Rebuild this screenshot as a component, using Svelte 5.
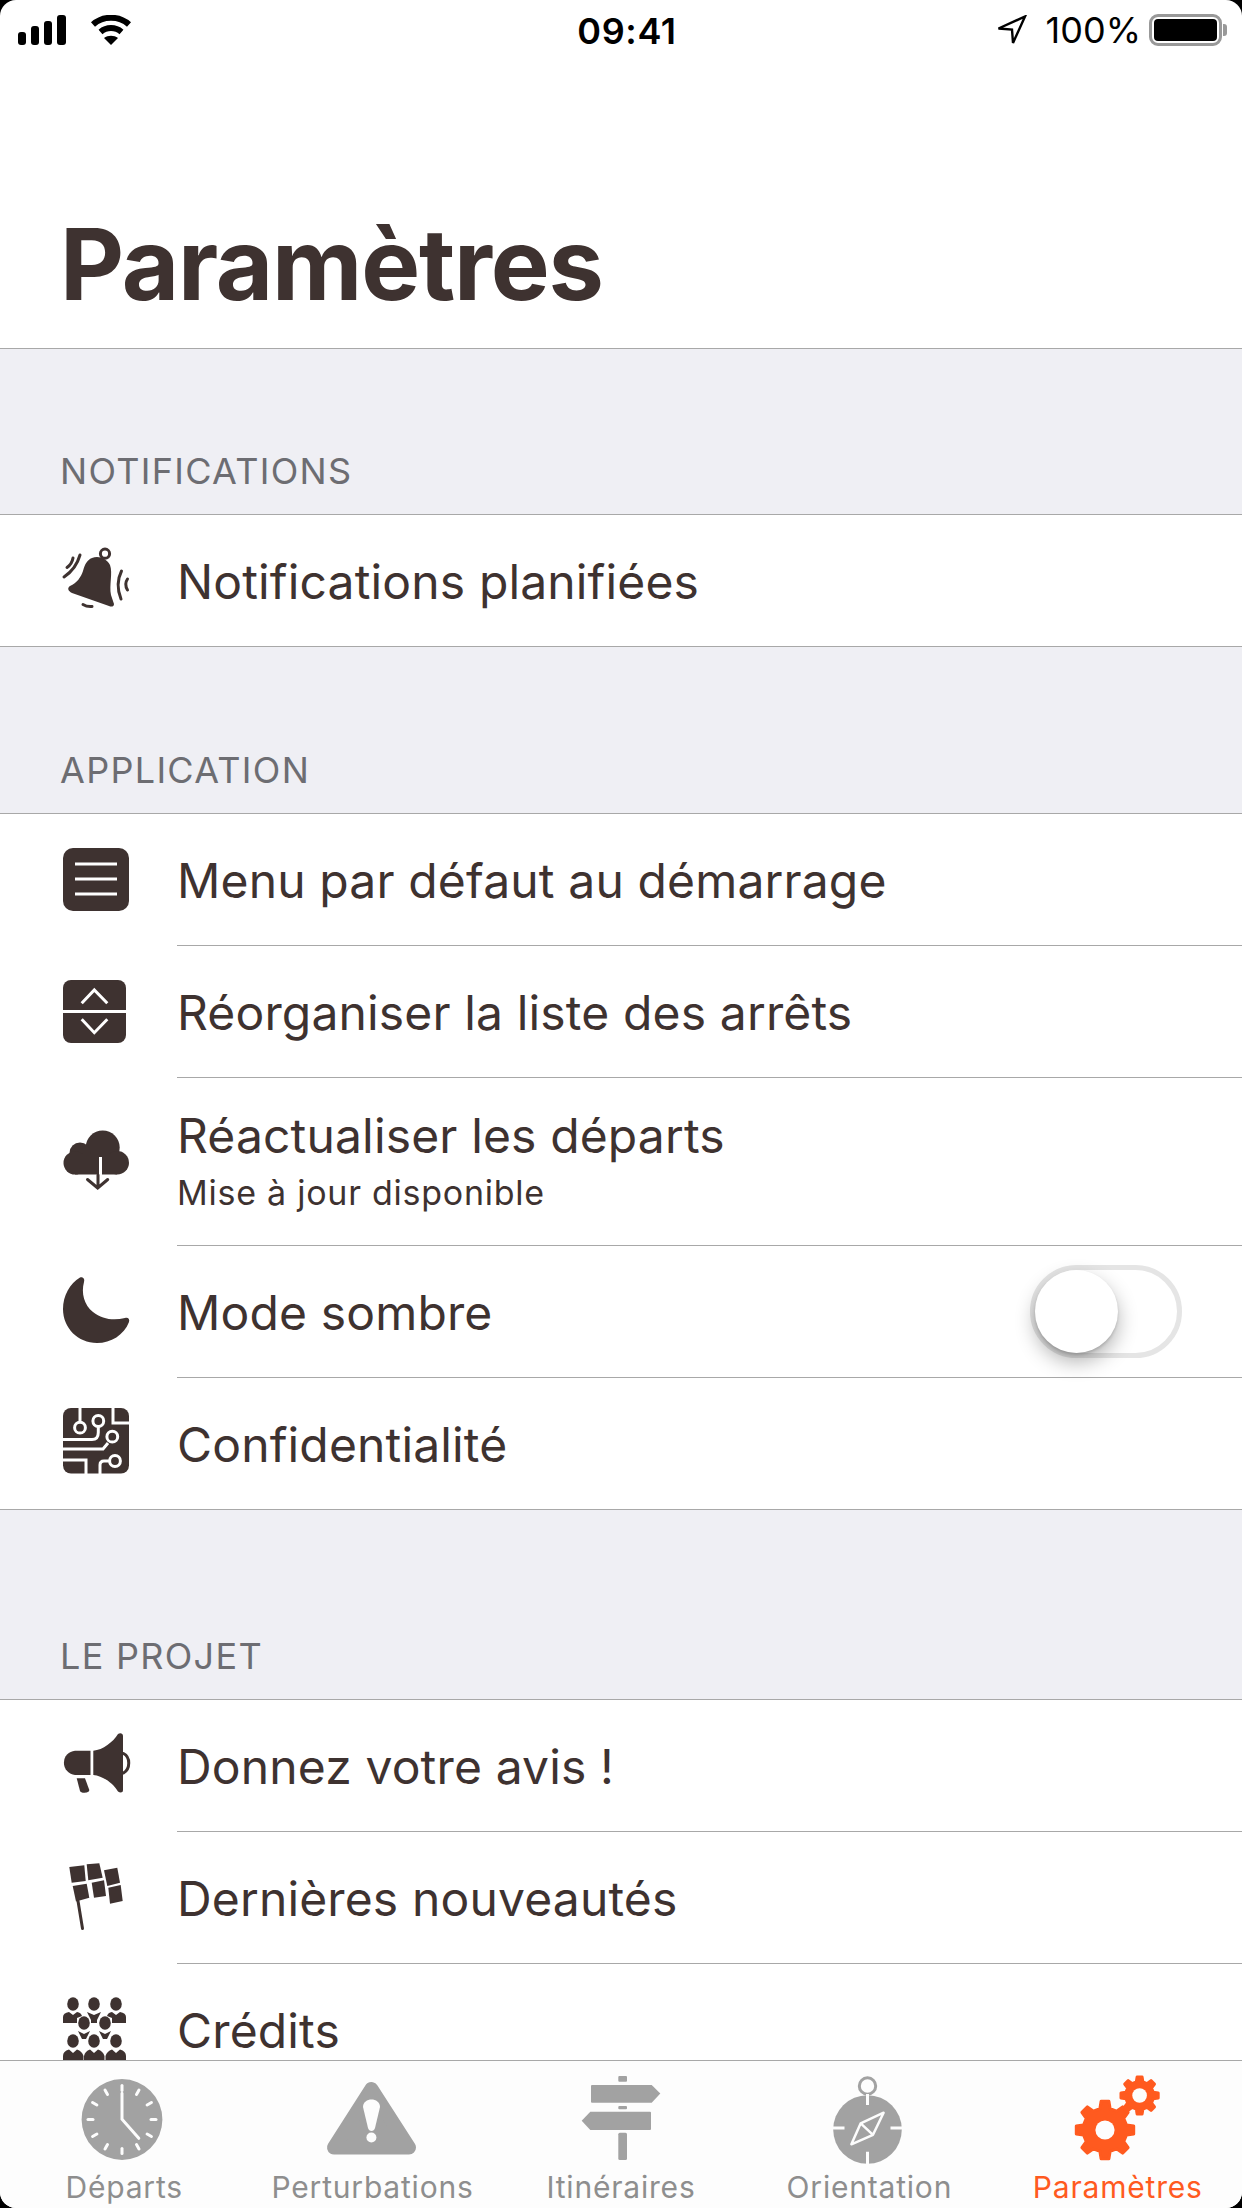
<script>
	const tabs = ['Départs', 'Perturbations', 'Itinéraires', 'Orientation', 'Paramètres'];
	const hours = Array.from({ length: 12 }, (_, i) => i * 30);

	// heads of the credits crowd, bodies are drawn by hand below
	const heads = [
		[10, 8], [31, 8], [53, 8],
		[21, 27], [42, 27],
		[10, 45], [31, 45], [53, 45]
	];

	function gear(cx, cy, outer, inner, teeth) {
		const step = (Math.PI * 2) / teeth;
		let d = '';
		for (let i = 0; i < teeth; i++) {
			const a = i * step;
			const pts = [
				[inner, a - step * 0.3],
				[outer, a - step * 0.17],
				[outer, a + step * 0.17],
				[inner, a + step * 0.3]
			];
			for (const [r, t] of pts) {
				d += (d ? 'L' : 'M') + (cx + r * Math.cos(t)).toFixed(1) + ' ' + (cy + r * Math.sin(t)).toFixed(1);
			}
		}
		return d + 'Z';
	}
</script>

<div class="screen">
	<div class="status">
		<div class="status-left">
			<svg class="signal" viewBox="0 0 48 30" aria-hidden="true">
				<rect x="0" y="17" width="8" height="13" rx="3" />
				<rect x="13" y="11" width="8" height="19" rx="3" />
				<rect x="26" y="6" width="8" height="24" rx="3" />
				<rect x="39" y="0" width="9" height="30" rx="3" />
			</svg>
			<svg class="wifi" viewBox="0 0 42 30" aria-hidden="true">
				<path d="M3 9.5C13 0.5 29 0.5 39 9.5" />
				<path d="M10.5 17C16.5 11.8 25.5 11.8 31.5 17" />
				<path class="wifi-tip" d="M21 30L14 23C18 20 24 20 28 23Z" />
			</svg>
		</div>
		<div class="time">09:41</div>
		<div class="status-right">
			<svg class="arrow" viewBox="0 0 30 30" aria-hidden="true">
				<path d="M1.5 13.5L28 1.5L16 28L15 14.5Z" />
			</svg>
			<span class="pct">100%</span>
			<div class="battery"><div class="battery-fill"></div></div>
			<div class="battery-nub"></div>
		</div>
	</div>

	<header class="head">
		<h1>Paramètres</h1>
	</header>

	<main class="list">
		<div class="label first">NOTIFICATIONS</div>
		<div class="group">
			<div class="row">
				<svg class="ico" viewBox="0 0 66 66" aria-hidden="true">
					<circle class="line" cx="42" cy="6.7" r="4.6" />
					<path d="M29 11C36 8 44 12 47 18C50 26 46 38 48 48L51 57C51 60 48 60 46 59L9 46C5 44 4 41 7 39C14 36 18 30 20 24C22 17 24 13 29 11Z" />
					<path class="line" d="M20 57.5Q24 60 29 59.5" />
					<path class="line" d="M1 30Q13 22 17 8" />
					<path class="line" d="M4 20.5Q9 17 10 11" />
					<path class="line" d="M58.5 24Q52 37 58 52" />
					<path class="line" d="M64.5 32Q61 37 64.5 43" />
				</svg>
				<div class="body"><span class="title">Notifications planifiées</span></div>
			</div>
		</div>

		<div class="label second">APPLICATION</div>
		<div class="group">
			<div class="row">
				<svg class="ico" viewBox="0 0 66 66" aria-hidden="true">
					<rect x="0" y="1" width="66" height="63" rx="10" />
					<path class="cut" d="M12 17H54M12 32H54M12 47H54" />
				</svg>
				<div class="body"><span class="title">Menu par défaut au démarrage</span></div>
			</div>
			<div class="row">
				<svg class="ico" viewBox="0 0 66 66" aria-hidden="true">
					<path d="M8 1H55A8 8 0 0 1 63 9V31H0V9A8 8 0 0 1 8 1Z" />
					<path d="M0 34H63V56A8 8 0 0 1 55 64H8A8 8 0 0 1 0 56Z" />
					<path class="cut" d="M18.7 24.3L31.3 11L44.3 24.3M18.7 40.3L31.3 53.7L44.3 40.3" />
				</svg>
				<div class="body"><span class="title">Réorganiser la liste des arrêts</span></div>
			</div>
			<div class="row tall">
				<svg class="ico" viewBox="0 0 66 66" aria-hidden="true">
					<circle cx="39.7" cy="18.5" r="17" />
					<circle cx="17" cy="24" r="10.5" />
					<circle cx="12" cy="34" r="11.5" />
					<circle cx="54.3" cy="33.7" r="11.7" />
					<rect x="12" y="25" width="42" height="20.5" />
					<path class="cut" d="M37.5 28V46" />
					<path class="line" d="M35 46V58M24.5 50.5L34.7 59L44.7 50.5" />
				</svg>
				<div class="body">
					<div>
						<div class="title">Réactualiser les départs</div>
						<div class="sub">Mise à jour disponible</div>
					</div>
				</div>
			</div>
			<div class="row">
				<svg class="ico" viewBox="0 0 66 66" aria-hidden="true">
					<path d="M17-1.5C20-2.5 22 0 21 3C18 14 21 26 30 33C39 40 50 42 62 39C65 38 67 40 66 43C61 56 48 64 34 64C15 64 0 49 0 30C0 17 7 4 17-1.5Z" />
				</svg>
				<div class="body">
					<span class="title">Mode sombre</span>
					<div class="toggle"><div class="knob"></div></div>
				</div>
			</div>
			<div class="row">
				<svg class="ico" viewBox="0 0 66 66" aria-hidden="true">
					<rect x="0" y="-2" width="66" height="65.5" rx="8" />
					<path class="cut" d="M17-2V12M35.3 17V22.5Q35.3 29.5 29 29.5H0M50-2V13H66M0 39H40L45 33M0 50H23V64M37 64V55Q37 51 41 51H46" />
					<circle class="ring" cx="17" cy="17.7" r="5.4" />
					<circle class="ring" cx="35.3" cy="11" r="5.4" />
					<circle class="ring" cx="49.3" cy="26.7" r="5.4" />
					<circle class="ring" cx="52" cy="51" r="5.4" />
				</svg>
				<div class="body"><span class="title">Confidentialité</span></div>
			</div>
		</div>

		<div class="label third">LE PROJET</div>
		<div class="group">
			<div class="row">
				<svg class="ico" viewBox="0 0 66 66" aria-hidden="true">
					<path d="M27.5 17.7H12A12.2 12.2 0 0 0 12 42H27.5Z" />
					<path d="M30.3 17.7C40 17 50 9 55 1C57 -0.5 60 0 60 3V57C60 60 57 60 55 58.5C50 50 40 43 30.3 42Z" />
					<path class="line" d="M60.5 20.5C67.5 24 67.5 36 60.5 40" />
					<path d="M13.7 45.3H22L26.3 57C26.5 60 18 61 17 58Z" />
				</svg>
				<div class="body"><span class="title">Donnez votre avis !</span></div>
			</div>
			<div class="row">
				<svg class="ico" viewBox="0 0 66 66" aria-hidden="true">
					<polygon points="6.3,2 21.3,0.3 22.7,16 8.7,17.7" />
					<polygon points="23.7,-0.7 36.3,-1.7 39.7,12.7 25.3,15.3" />
					<polygon points="41,5.3 54.3,2.7 57,17.7 44.3,21" />
					<polygon points="9.7,21 23.7,18.7 26.3,32.7 13,36.5" />
					<polygon points="28.7,17.7 41,15.3 43,31 31,32.7" />
					<polygon points="45.3,22.7 57.7,20 59.7,36 47,38.7" />
					<path class="line" d="M15 36L19.5 63.5" />
				</svg>
				<div class="body"><span class="title">Dernières nouveautés</span></div>
			</div>
			<div class="row">
				<svg class="ico" viewBox="0 0 66 66" aria-hidden="true">
					<path d="M0 27V21Q0 17 6 16L10 19L14 16Q18 16.5 19 20L14 22V27Z" />
					<path d="M63 27V21Q63 17 57 16L53 19L49 16Q45 16.5 44 20L49 22V27Z" />
					<path d="M24 16L31 19L38 16L34 24V27H28V24Z" />
					<path d="M15 35L21 38L27 35L23 43H19Z" />
					<path d="M36 35L42 38L48 35L44 43H40Z" />
					<path d="M0 66V60Q0 55 6 53.5L10 57L14 53.5Q19 55 20.5 60V66Z" />
					<path d="M21 66V60Q22 55 27 53.5L31 57L35 53.5Q40 55 41.5 60V66Z" />
					<path d="M42.5 66V60Q44 55 49 53.5L53 57L57 53.5Q63 55 63 60V66Z" />
					{#each heads as [x, y]}
						<ellipse cx={x} cy={y} rx="5.8" ry="6.8" />
					{/each}
				</svg>
				<div class="body"><span class="title">Crédits</span></div>
			</div>
		</div>
	</main>

	<nav class="tabs">
		{#each tabs as tab, i}
			<div class="tab" class:active={i === 4}>
				<svg class="tab-ico" viewBox="0 0 120 90" aria-hidden="true">
					{#if i === 0}
						<circle cx="58" cy="43.5" r="40.4" />
						{#each hours as deg}
							<path class="tick" d="M58 9.5V14.5" transform="rotate({deg} 58 43.5)" />
						{/each}
						<path class="hand" d="M58 17.3V43.3L74.8 62.3" />
					{:else if i === 1}
						<path class="tri" d="M58.4 13L21 71.5H96Z" />
						<path class="mark" d="M50 31C50 21 67 21 67 31L62 52C61 56 56 56 55 52Z" />
						<circle class="mark" cx="58.4" cy="61.5" r="5" />
					{:else if i === 2}
						<rect x="57.3" y="0" width="8.7" height="5.7" rx="1" />
						<path d="M31 9H90.7L99.3 17.6L90.7 26.7H31Q30 26.7 30 25.7V10Q30 9 31 9Z" />
						<rect x="57.3" y="30" width="8.7" height="3.3" rx="1" />
						<path d="M89 35.7H29.3L20.7 44.7L29.3 54H89Q90 54 90 53V36.7Q90 35.7 89 35.7Z" />
						<rect x="57.3" y="56.7" width="8.7" height="27.3" rx="1.5" />
					{:else if i === 3}
						<circle class="loop" cx="58.5" cy="10" r="8.2" />
						<circle cx="58.5" cy="53.5" r="34.3" />
						<path class="needle" d="M58.5 18V29M58.5 75.7V88M24 52H35.5M81.5 52H93" />
						<path class="needle thin" d="M74.6 36.7L64 58.8L42.4 68.3L51.7 47.3ZM51.7 47.3L64 58.8" />
					{:else}
						<path class="cog" d={gear(47, 54, 29, 22, 8)} />
						<circle class="hole" cx="47" cy="54" r="9.6" />
						<path class="cog" d={gear(81.6, 19.5, 18.8, 14, 8)} />
						<circle class="hole" cx="81.6" cy="19.5" r="7.3" />
					{/if}
				</svg>
				<span class="tab-label">{tab}</span>
			</div>
		{/each}
	</nav>
</div>

<style>
	:global(body) {
		background: #000;
	}
	.screen {
		--ink: #3e3230;
		--line: #a8a8a8;
		width: 1242px;
		height: 2208px;
		display: flex;
		flex-direction: column;
		overflow: hidden;
		border-radius: 16px;
		background: #fff;
		font-family: Inter, "Liberation Sans", sans-serif;
		color: var(--ink);
	}

	.status {
		height: 60px;
		flex: none;
		display: grid;
		grid-template-columns: 1fr auto 1fr;
		align-items: start;
		color: #000;
	}
	.status-left {
		display: flex;
		padding: 15px 0 0 18px;
		gap: 24px;
	}
	.signal {
		width: 48px;
		height: 30px;
		fill: #000;
	}
	.wifi {
		width: 42px;
		height: 30px;
		fill: none;
		stroke: #000;
		stroke-width: 6;
	}
	.wifi-tip {
		fill: #000;
		stroke: none;
	}
	.time {
		font-size: 36px;
		font-weight: 600;
		line-height: 62px;
		letter-spacing: 0.6px;
		margin-left: 12px;
	}
	.status-right {
		display: flex;
		justify-content: flex-end;
		align-items: center;
		height: 60px;
		padding-right: 15px;
	}
	.arrow {
		width: 30px;
		height: 30px;
		fill: none;
		stroke: #000;
		stroke-width: 2.4;
		margin-right: 19px;
	}
	.pct {
		font-size: 36px;
		margin-right: 8px;
	}
	.battery {
		width: 73px;
		height: 32px;
		box-sizing: border-box;
		border: 3px solid #999;
		border-radius: 9px;
		padding: 2px;
	}
	.battery-fill {
		height: 100%;
		background: #000;
		border-radius: 4px;
	}
	.battery-nub {
		width: 4px;
		height: 12px;
		margin-left: 1px;
		background: #999;
		border-radius: 0 3px 3px 0;
	}

	.head {
		height: 289px;
		flex: none;
		box-sizing: border-box;
		border-bottom: 1px solid var(--line);
		display: flex;
		align-items: flex-end;
		padding: 0 0 24px 60px;
	}
	h1 {
		margin: 0;
		font-size: 99px;
		font-weight: 700;
		line-height: 120px;
		letter-spacing: -1.2px;
	}

	.list {
		flex: 1;
		min-height: 0;
		overflow: hidden;
		background: #efeff4;
	}
	.label {
		display: flex;
		align-items: flex-end;
		box-sizing: border-box;
		padding: 0 0 25px 60px;
		font-size: 36px;
		line-height: 36px;
		letter-spacing: 1.3px;
		color: #6d6d72;
	}
	.label.first { height: 165px; }
	.label.second { height: 166px; }
	.label.third { height: 189px; }

	.group {
		background: #fff;
		border-top: 1px solid var(--line);
		border-bottom: 1px solid var(--line);
	}
	.row {
		display: flex;
		height: 132px;
		padding-left: 63px;
		align-items: stretch;
	}
	.row.tall {
		height: 168px;
	}
	.row:last-child {
		height: 131px;
	}
	.ico {
		width: 66px;
		height: 66px;
		flex: none;
		align-self: center;
		margin-top: -1px;
		overflow: visible;
		fill: var(--ink);
	}
	.line {
		fill: none;
		stroke: var(--ink);
		stroke-width: 3;
		stroke-linecap: round;
	}
	.cut {
		fill: none;
		stroke: #fff;
		stroke-width: 3;
	}
	.ring {
		fill: var(--ink);
		stroke: #fff;
		stroke-width: 3;
	}
	.body {
		flex: 1;
		margin-left: 48px;
		display: flex;
		align-items: center;
		justify-content: space-between;
		border-bottom: 1px solid var(--line);
	}
	.row:last-child .body {
		border-bottom: none;
	}
	.title {
		font-size: 48px;
		line-height: 56px;
		letter-spacing: 0.15px;
	}
	.body > .title {
		margin-top: 2px;
	}
	.sub {
		font-size: 34px;
		line-height: 44px;
		letter-spacing: 0.75px;
		margin-top: 7px;
	}
	.toggle {
		width: 152px;
		height: 93px;
		box-sizing: border-box;
		margin-right: 60px;
		border: 5px solid #e5e5e5;
		border-radius: 47px;
	}
	.knob {
		width: 83px;
		height: 83px;
		border-radius: 50%;
		background: #fff;
		box-shadow: 0 9px 20px rgba(0, 0, 0, 0.3), 0 2px 3px rgba(0, 0, 0, 0.15);
	}

	.tabs {
		height: 148px;
		flex: none;
		box-sizing: border-box;
		display: grid;
		grid-template-columns: repeat(5, 1fr);
		border-top: 1px solid var(--line);
		background: #fdfdfd;
	}
	.tab {
		display: flex;
		flex-direction: column;
		align-items: center;
		padding-top: 15px;
		color: #8e8e8e;
		fill: #a2a2a2;
	}
	.tab.active {
		color: #ff5a1f;
		fill: #ff5a1f;
	}
	.tab-ico {
		width: 120px;
		height: 90px;
		flex: none;
		overflow: visible;
		margin-bottom: 3px;
	}
	.tab-label {
		font-size: 30px;
		line-height: 36px;
		letter-spacing: 0.8px;
		white-space: nowrap;
	}
	.tick, .hand, .needle {
		fill: none;
		stroke: #fdfdfd;
		stroke-width: 3;
		stroke-linecap: round;
	}
	.needle {
		stroke-linecap: butt;
	}
	.needle.thin {
		stroke-width: 2.5;
		stroke-linejoin: round;
	}
	.tri {
		stroke: #a2a2a2;
		stroke-width: 14;
		stroke-linejoin: round;
	}
	.mark, .hole {
		fill: #fdfdfd;
	}
	.loop {
		fill: none;
		stroke: #a2a2a2;
		stroke-width: 3;
	}
	.cog {
		stroke: #ff5a1f;
		stroke-width: 3;
		stroke-linejoin: round;
	}
</style>
